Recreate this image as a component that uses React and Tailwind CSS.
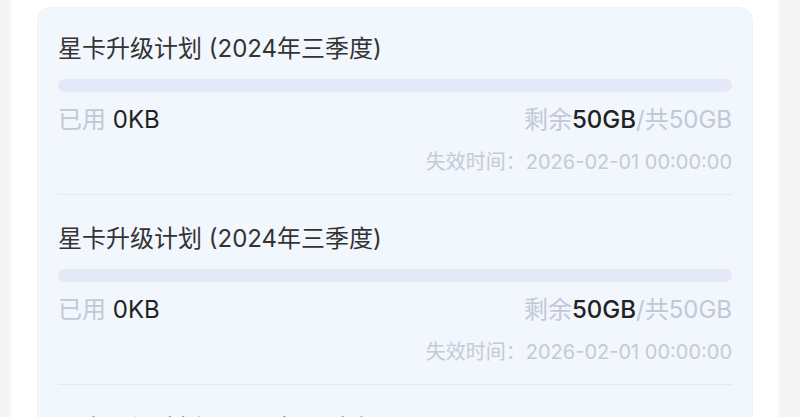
import React from "react";

const plans = [
  { name: "星卡升级计划 (2024年三季度)", used: "0KB", left: "50GB", total: "50GB", expire: "2026-02-01 00:00:00" },
  { name: "星卡升级计划 (2024年三季度)", used: "0KB", left: "50GB", total: "50GB", expire: "2026-02-01 00:00:00" },
  { name: "星卡升级计划 (2024年三季度)", used: "0KB", left: "50GB", total: "50GB", expire: "2026-02-01 00:00:00" },
];

function PlanItem({ plan }) {
  return (
    <div className="pt-[28px] first:pt-[25px] pb-[19px] border-b border-[#e4e8f0]">
      <div className="text-[24px] leading-[32px] text-[#333333]">{plan.name}</div>
      <div className="mt-[14px] h-[13px] rounded-full bg-[#e5e8f6]" />
      <div className="mt-[13px] flex items-center justify-between text-[24px] leading-[30px]">
        <div>
          <span className="text-[#c2c8d6]">已用 </span>
          <span className="text-[#222222]">{plan.used}</span>
        </div>
        <div className="text-[#c2c8d6]">
          剩余<span className="text-[#222222] font-medium">{plan.left}</span>/共{plan.total}
        </div>
      </div>
      <div className="mt-[14px] text-right text-[20px] leading-[26px] text-[#c5cad8]">
        失效时间：{plan.expire}
      </div>
    </div>
  );
}

export default function App() {
  return (
    <div
      className="flex h-[417px] w-[800px] overflow-hidden bg-white"
      style={{ fontFamily: 'Inter, "Noto Sans CJK SC", sans-serif' }}
    >
      <div className="w-[11px] shrink-0 bg-[#f5f5f5]" />
      <div className="flex-1 px-[26px] pt-[7px]">
        <div className="rounded-[14px] border border-[#edf1f8] bg-[#f2f6fd] px-[20px]">
          {plans.map((plan, i) => (
            <PlanItem key={i} plan={plan} />
          ))}
        </div>
      </div>
      <div className="w-[21px] shrink-0 bg-[#f5f5f5]" />
    </div>
  );
}
